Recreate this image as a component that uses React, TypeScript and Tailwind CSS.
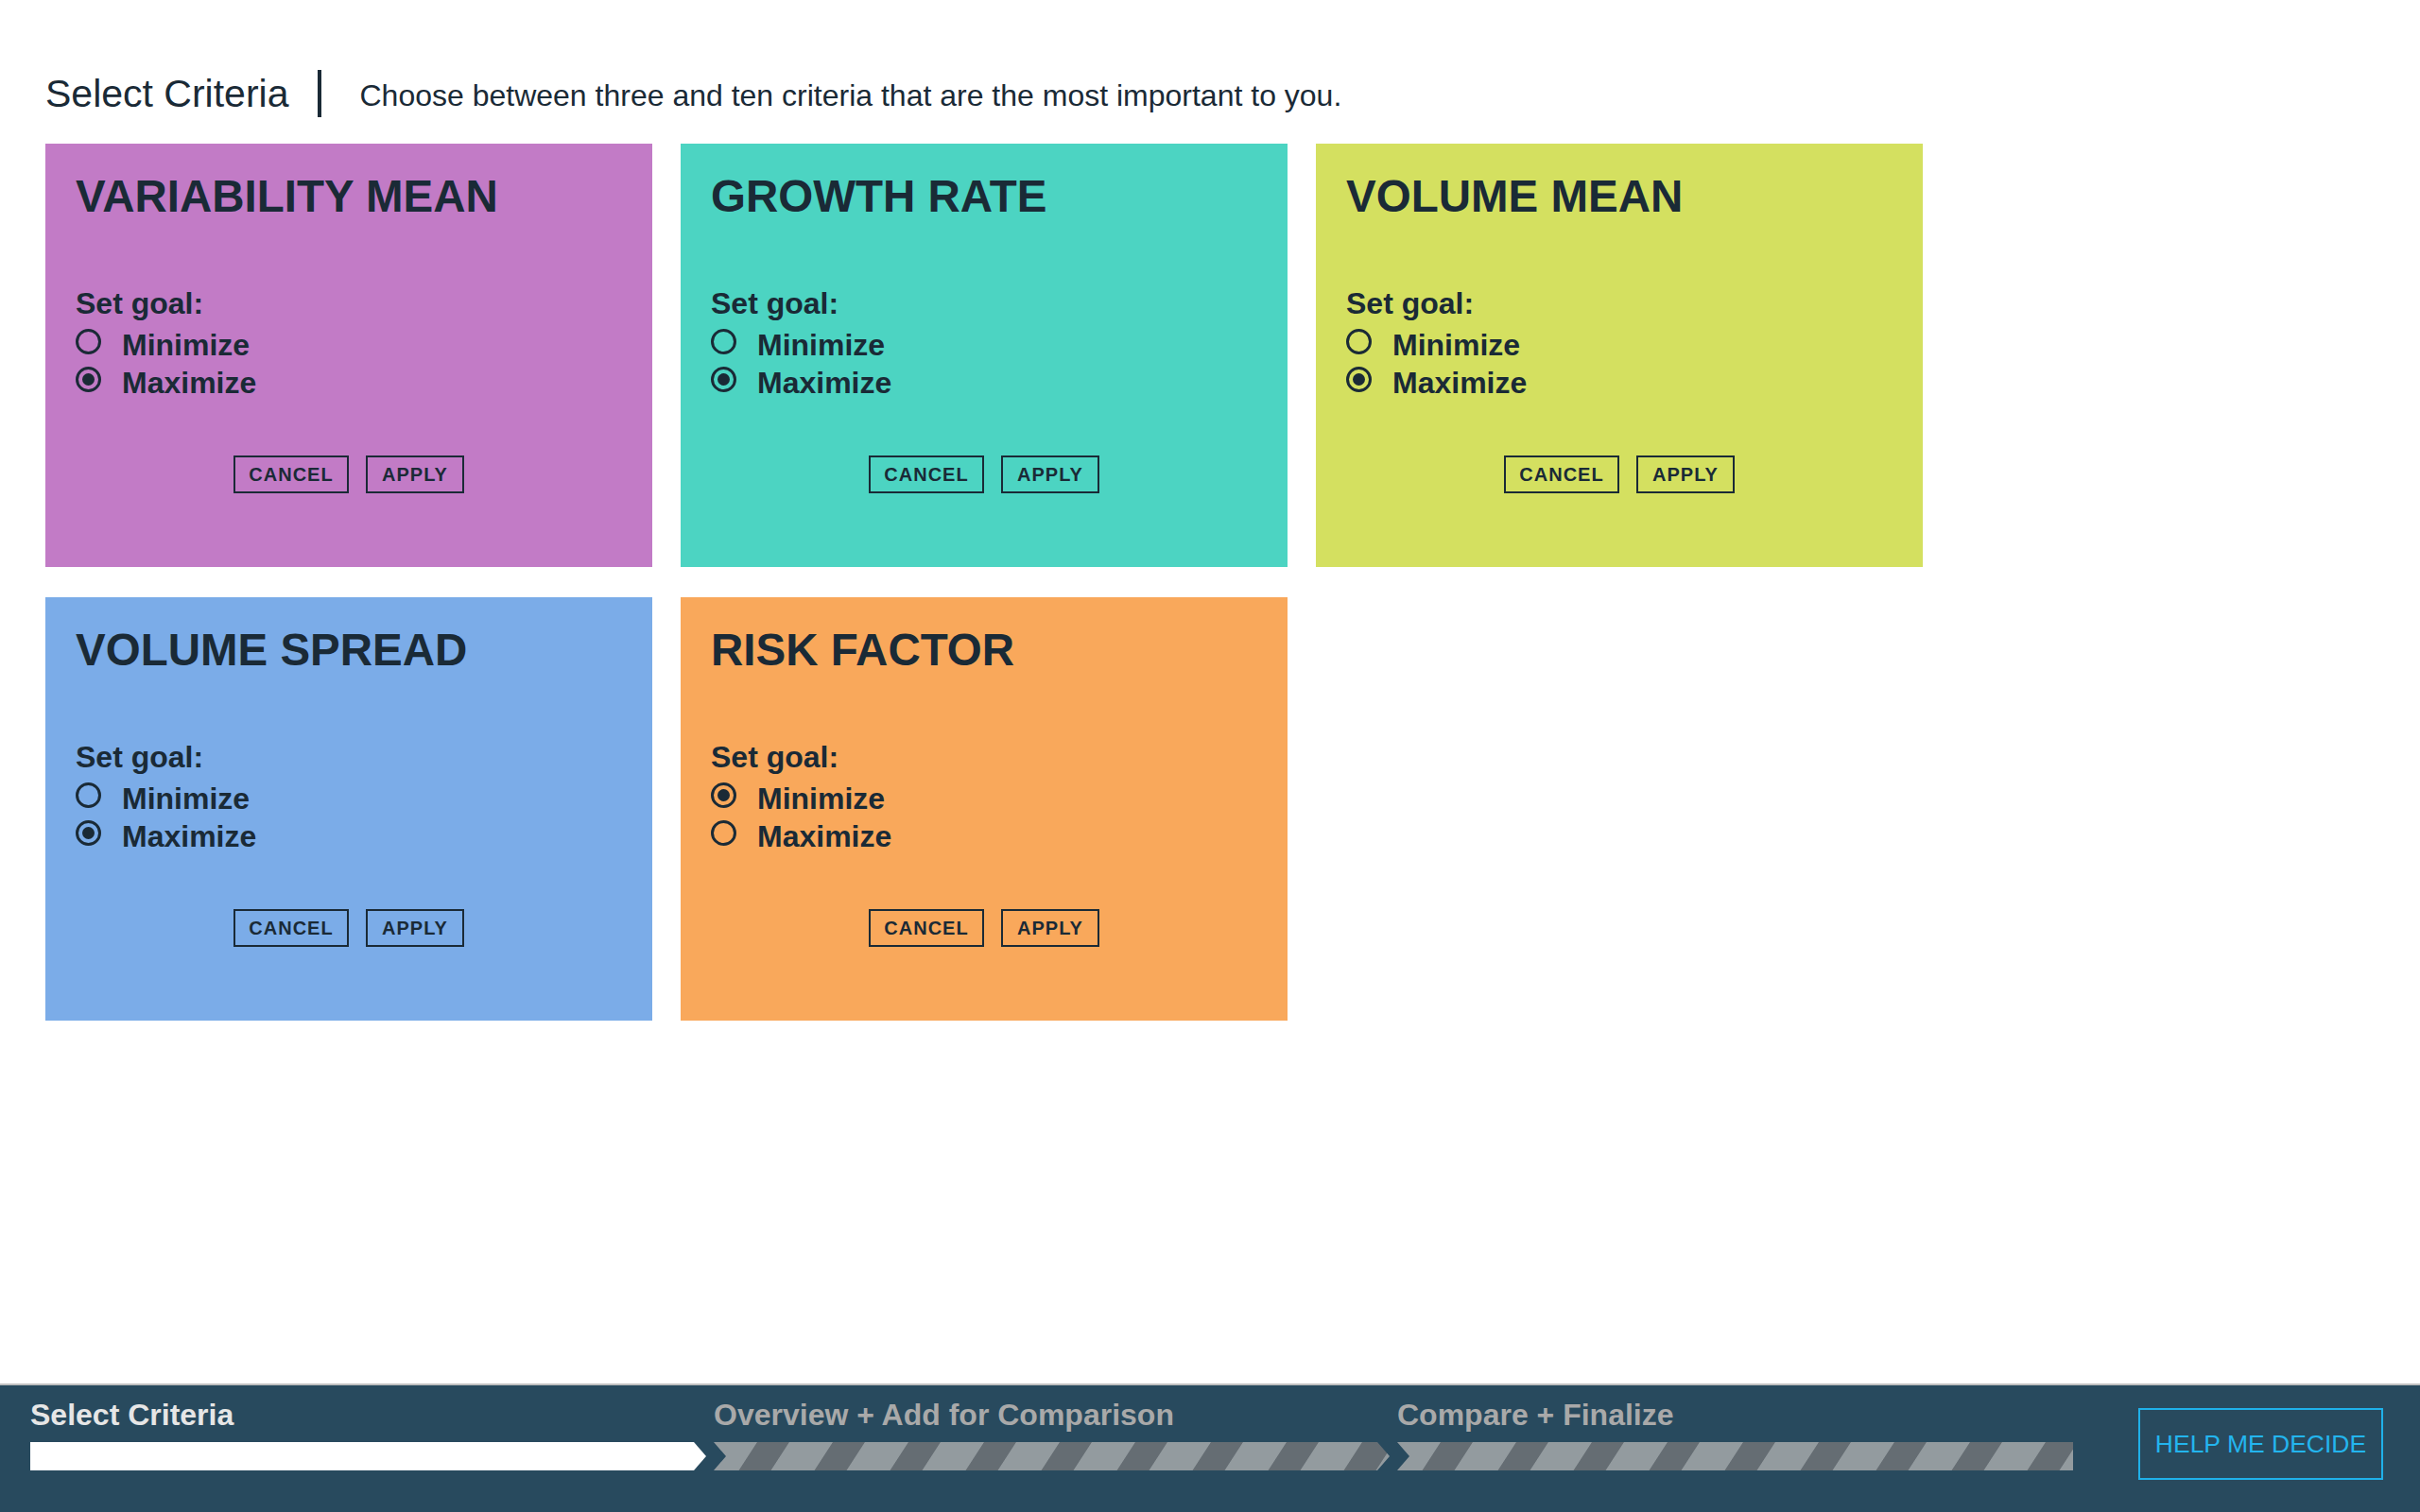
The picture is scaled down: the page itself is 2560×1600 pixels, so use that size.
import React from "react";

type Card = { title: string; bg: string; max: boolean };

const cards: Card[] = [
  { title: "VARIABILITY MEAN", bg: "bg-[#c27bc6]", max: true },
  { title: "GROWTH RATE", bg: "bg-[#4cd4c2]", max: true },
  { title: "VOLUME MEAN", bg: "bg-[#d4e060]", max: true },
  { title: "VOLUME SPREAD", bg: "bg-[#7bace8]", max: true },
  { title: "RISK FACTOR", bg: "bg-[#f9a85b]", max: false },
];

function Radio({ checked, label }: { checked: boolean; label: string }) {
  return (
    <div className="flex items-center h-[40px] gap-[22px]">
      <div className="w-[27px] h-[27px] mb-[7px] rounded-full border-[3px] border-[#1a2a36] flex items-center justify-center">
        {checked && <div className="w-[13px] h-[13px] rounded-full bg-[#1a2a36]" />}
      </div>
      <span className="text-[32px] font-bold leading-[40px]">{label}</span>
    </div>
  );
}

function CriteriaCard({ c }: { c: Card }) {
  return (
    <div className={`${c.bg} h-[448px] pt-[32px] px-[32px] flex flex-col`}>
      <h2 className="text-[47.5px] font-bold leading-[47px]">{c.title}</h2>
      <div className="mt-[70px] text-[32px] font-bold leading-[40px] mb-[4px]">Set goal:</div>
      <Radio checked={!c.max} label="Minimize" />
      <Radio checked={c.max} label="Maximize" />
      <div className="mt-[57px] flex justify-center gap-[18px]">
        <button className="h-[40px] w-[122px] border-2 border-[#1a2a36] text-[20px] font-bold tracking-[1px] flex items-center justify-center">
          CANCEL
        </button>
        <button className="h-[40px] w-[104px] border-2 border-[#1a2a36] text-[20px] font-bold tracking-[1px] flex items-center justify-center">
          APPLY
        </button>
      </div>
    </div>
  );
}

function Segment({ kind, id }: { kind: "first" | "mid" | "last"; id: string }) {
  const W = 715;
  const H = 30;
  const t = 13;
  let pts = "";
  if (kind === "first") pts = `0,0 ${W - t},0 ${W},${H / 2} ${W - t},${H} 0,${H}`;
  if (kind === "mid") pts = `0,0 ${W - t},0 ${W},${H / 2} ${W - t},${H} 0,${H} ${t},${H / 2}`;
  if (kind === "last") pts = `0,0 ${W},0 ${W},${H} 0,${H} ${t},${H / 2}`;
  return (
    <svg width={W} height={H} viewBox={`0 0 ${W} ${H}`} className="block">
      <defs>
        <pattern id={id} patternUnits="userSpaceOnUse" width="80" height="30" patternTransform="skewX(-33)">
          <rect x="0" y="0" width="80" height="30" fill="#656d73" />
          <rect x="0" y="0" width="46" height="30" fill="#939b9f" />
        </pattern>
      </defs>
      <polygon points={pts} fill={kind === "first" ? "#ffffff" : `url(#${id})`} />
    </svg>
  );
}

export default function App() {
  const steps = [
    { label: "Select Criteria", active: true, kind: "first" as const },
    { label: "Overview + Add for Comparison", active: false, kind: "mid" as const },
    { label: "Compare + Finalize", active: false, kind: "last" as const },
  ];
  return (
    <div className="min-h-screen flex flex-col bg-white text-[#1a2a36] font-[family-name:'Liberation_Sans',Arial,sans-serif]">
      <div className="mt-[74px] pl-[48px] flex items-center h-[50px]">
        <h1 className="text-[41px] font-normal leading-[50px]">Select Criteria</h1>
        <div className="ml-[31px] w-[4px] h-[50px] bg-[#1a2a36]" />
        <p className="ml-[40px] mt-[4px] text-[32px] leading-[40px]">
          Choose between three and ten criteria that are the most important to you.
        </p>
      </div>

      <div className="mt-[28px] pl-[48px] grid grid-cols-[repeat(3,642px)] gap-x-[30px] gap-y-[32px]">
        {cards.map((c) => (
          <CriteriaCard key={c.title} c={c} />
        ))}
      </div>

      <div className="mt-auto h-[136px] border-t-2 border-[#c0c0c0] bg-[#284a5e] flex justify-between pl-[32px] pr-[39px]">
        <div className="flex gap-[8px] pt-[12px]">
          {steps.map((s, i) => (
            <div key={s.label} className="flex flex-col">
              <div
                className={`text-[32px] font-bold leading-[38px] ${s.active ? "text-[#e6e6e6]" : "text-[#a9a9a9]"}`}
              >
                {s.label}
              </div>
              <div className="mt-[10px]">
                <Segment kind={s.kind} id={`stripes-${i}`} />
              </div>
            </div>
          ))}
        </div>
        <button className="mt-[24px] w-[259px] h-[76px] border-2 border-[#1fb1ea] text-[#23b5ee] text-[26.5px] leading-none flex items-center justify-center">
          HELP ME DECIDE
        </button>
      </div>
    </div>
  );
}
